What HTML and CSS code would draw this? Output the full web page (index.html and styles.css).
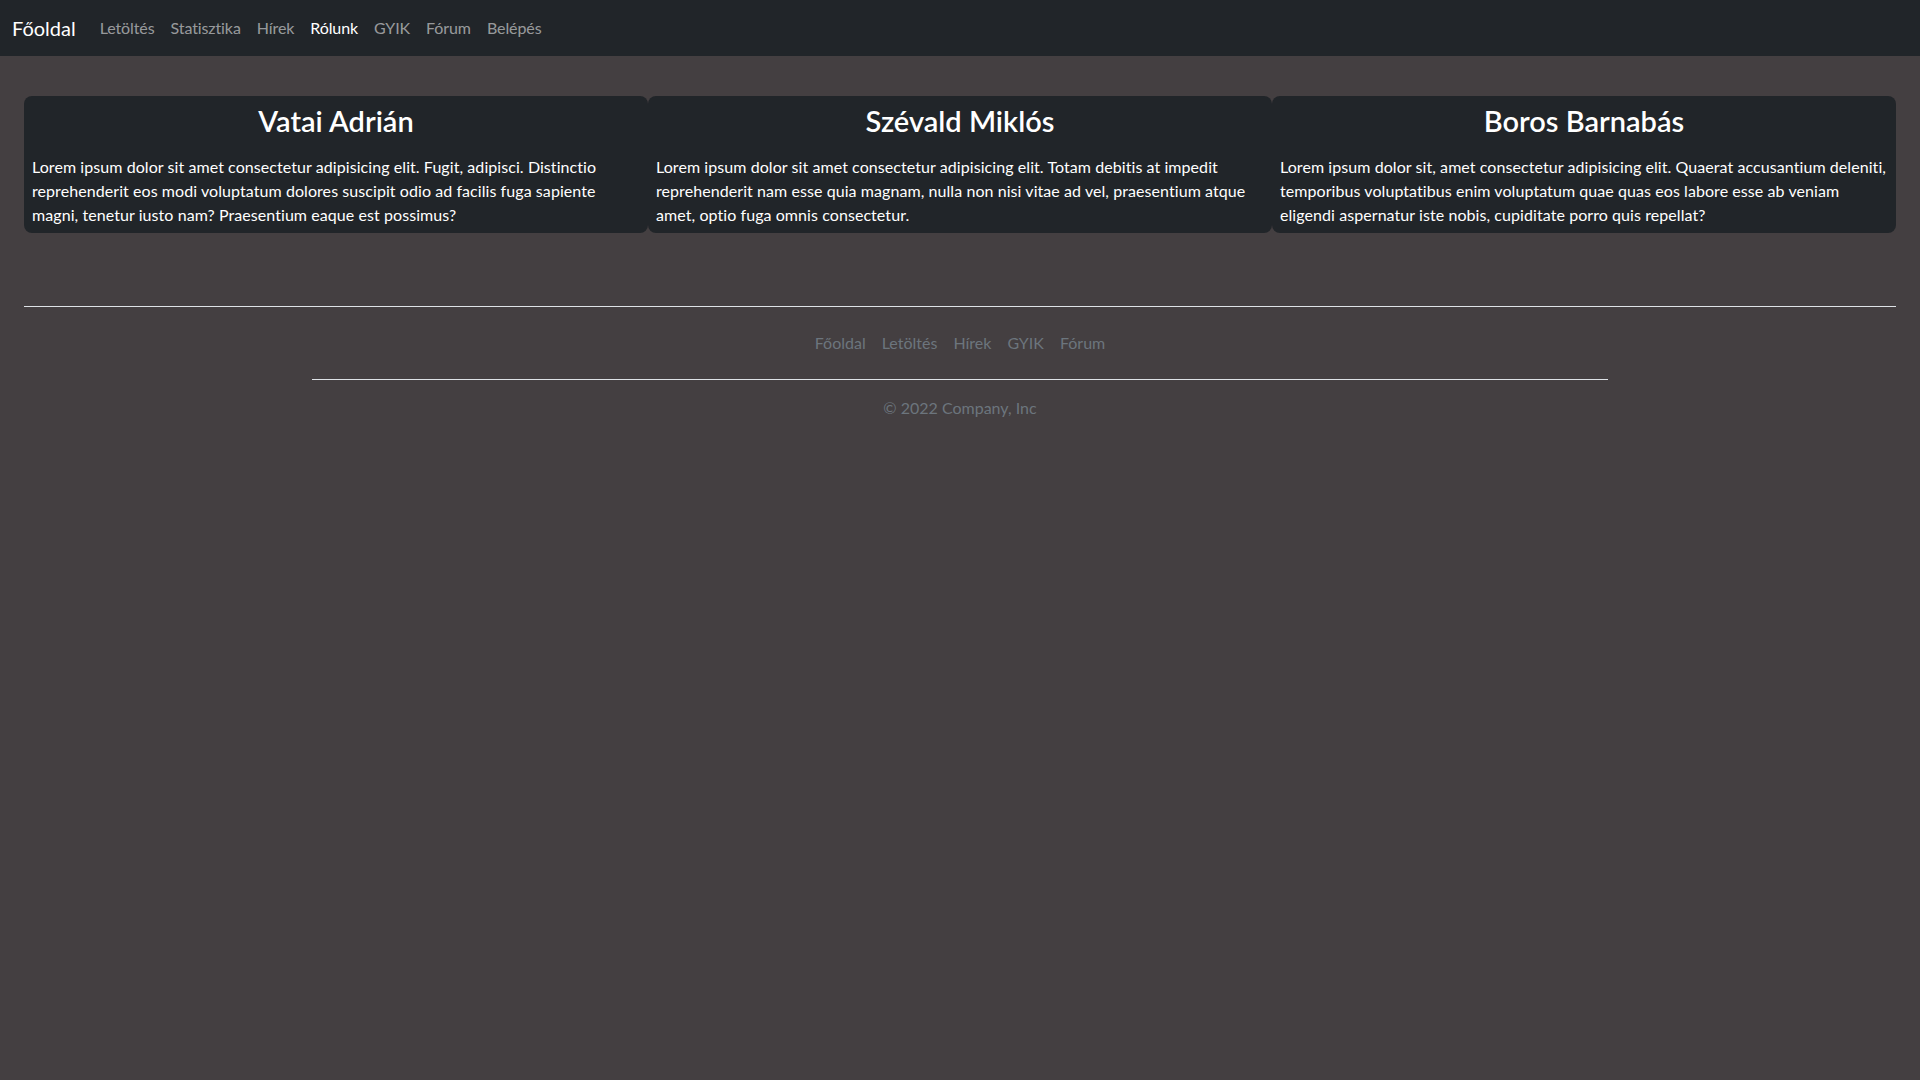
FILE: index.html
```html
<!DOCTYPE html>
<html lang="hu">
<head>
<meta charset="utf-8">
<title>Rólunk</title>
<link rel="stylesheet" href="styles.css">
</head>
<body>
<nav class="navbar">
  <a class="brand" href="#">Főoldal</a>
  <ul class="nav-links">
    <li><a class="nav-link" href="#">Letöltés</a></li>
    <li><a class="nav-link" href="#">Statisztika</a></li>
    <li><a class="nav-link" href="#">Hírek</a></li>
    <li><a class="nav-link active" href="#">Rólunk</a></li>
    <li><a class="nav-link" href="#">GYIK</a></li>
    <li><a class="nav-link" href="#">Fórum</a></li>
    <li><a class="nav-link" href="#">Belépés</a></li>
  </ul>
</nav>
<main class="page">
  <section class="cards">
    <div class="card">
      <h3 class="card-title">Vatai Adrián</h3>
      <p class="card-text">Lorem ipsum dolor sit amet consectetur adipisicing elit. Fugit, adipisci. Distinctio reprehenderit eos modi voluptatum dolores suscipit odio ad facilis fuga sapiente magni, tenetur iusto nam? Praesentium eaque est possimus?</p>
    </div>
    <div class="card">
      <h3 class="card-title">Szévald Miklós</h3>
      <p class="card-text">Lorem ipsum dolor sit amet consectetur adipisicing elit. Totam debitis at impedit reprehenderit nam esse quia magnam, nulla non nisi vitae ad vel, praesentium atque amet, optio fuga omnis consectetur.</p>
    </div>
    <div class="card">
      <h3 class="card-title">Boros Barnabás</h3>
      <p class="card-text">Lorem ipsum dolor sit, amet consectetur adipisicing elit. Quaerat accusantium deleniti, temporibus voluptatibus enim voluptatum quae quas eos labore esse ab veniam eligendi aspernatur iste nobis, cupiditate porro quis repellat?</p>
    </div>
  </section>
  <hr class="divider">
  <footer class="footer">
    <ul class="footer-nav">
      <li><a class="footer-link" href="#">Főoldal</a></li>
      <li><a class="footer-link" href="#">Letöltés</a></li>
      <li><a class="footer-link" href="#">Hírek</a></li>
      <li><a class="footer-link" href="#">GYIK</a></li>
      <li><a class="footer-link" href="#">Fórum</a></li>
    </ul>
    <p class="copyright">© 2022 Company, Inc</p>
  </footer>
</main>
</body>
</html>
```

FILE: styles.css
```css
* { box-sizing: border-box; }
html, body { margin: 0; padding: 0; }
body {
  background: #443f41;
  color: #fff;
  font-family: "Lato", "Noto Sans", sans-serif;
  font-size: 16px;
  line-height: 1.5;
  min-height: 1080px;
}
a { text-decoration: none; }
ul { list-style: none; margin: 0; padding: 0; }

.navbar {
  background: #212529;
  height: 56px;
  display: flex;
  align-items: center;
  padding: 0 12px;
}
.brand {
  color: #fff;
  font-size: 20px;
  line-height: 30px;
  margin-right: 16px;
}
.nav-links { display: flex; }
.nav-link {
  display: block;
  padding: 8px;
  color: rgba(255,255,255,0.55);
  letter-spacing: -0.1px;
}
.nav-link.active { color: #fff; }

.page { padding: 40px 24px 0; }

.cards { display: flex; }
.card {
  flex: 1 1 0;
  background: #212529;
  border-radius: 8px;
  padding: 8px 8px 6px;
}
.card-title {
  margin: 0 0 17px;
  text-align: center;
  font-size: 29px;
  font-weight: 600;
  line-height: 34px;
}
.card-text {
  margin: 0;
  letter-spacing: 0.07px;
}

.divider {
  margin: 73px 0 0;
  border: 0;
  border-top: 1px solid #dee2e6;
}

.footer {
  width: 1296px;
  margin: 0 auto;
  padding-top: 16px;
}
.footer-nav {
  display: flex;
  justify-content: center;
  padding-bottom: 16px;
  border-bottom: 1px solid #dee2e6;
  margin-bottom: 16px;
}
.footer-link {
  display: block;
  padding: 8px;
  color: #6c757d;
}
.copyright {
  margin: 0;
  text-align: center;
  color: #6c757d;
}
```
